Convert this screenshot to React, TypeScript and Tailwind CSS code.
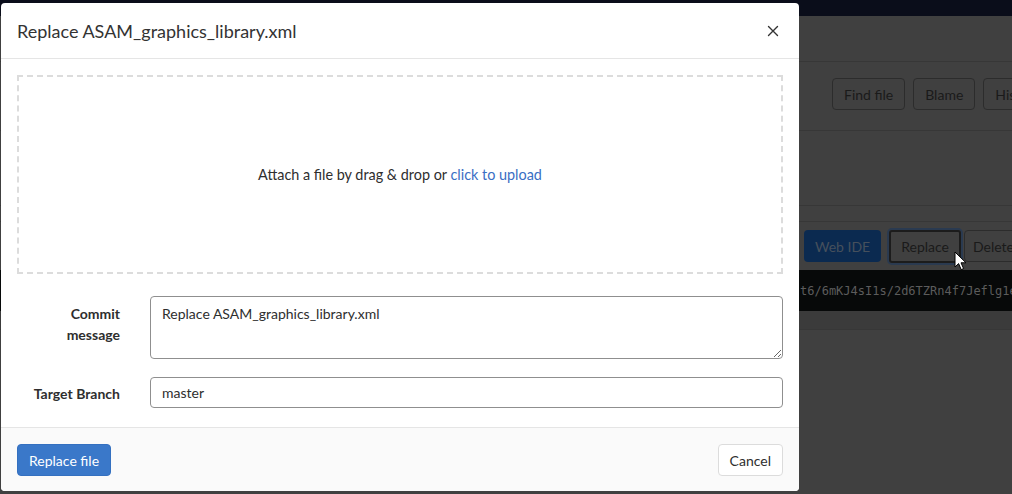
import React from "react";

const font = { fontFamily: "Lato, 'Noto Sans', sans-serif" };

function CloseIcon() {
  return (
    <svg width="12" height="12" viewBox="0 0 12 12" aria-hidden="true">
      <path d="M1.5 1.5l9 9M10.5 1.5l-9 9" stroke="#333" strokeWidth="1.4" strokeLinecap="round" />
    </svg>
  );
}

function Cursor() {
  return (
    <svg width="14" height="20" viewBox="0 0 14 20" className="absolute left-[954px] top-[251px]" aria-hidden="true">
      <path d="M1 1v15l3.6-3.4 2.6 6 2.4-1-2.6-5.8H12z" fill="#fff" stroke="#000" strokeWidth="1" strokeLinejoin="round" />
    </svg>
  );
}

function PageButton({ children, className = "" }: { children: React.ReactNode; className?: string }) {
  return (
    <div className={`shrink-0 h-[32px] flex items-center rounded-[4px] border border-[rgb(44,44,44)] text-[14px] text-[rgb(26,26,26)] ${className}`}>
      {children}
    </div>
  );
}

export default function App() {
  return (
    <div className="relative w-[1012px] h-[494px] overflow-hidden bg-[#404040]" style={font}>
      {/* dimmed page behind the modal */}
      <div className="h-[16px] bg-[#0a0d1a]" />
      <div className="h-[46px] border-b border-[rgb(55,55,55)]" />
      <div className="h-[69px] border-b border-[rgb(55,55,55)] flex items-start pt-[16px] pl-[832px] gap-[8px]">
        <PageButton className="px-[11px]">Find file</PageButton>
        <PageButton className="px-[11px]">Blame</PageButton>
        <PageButton className="px-[11px]">History</PageButton>
      </div>
      <div className="h-[75px] border-b border-[rgb(55,55,55)]" />
      <div className="h-[16px] border-b border-[rgb(55,55,55)]" />
      <div className="h-[48px] flex items-center pl-[804px]">
        <div className="shrink-0 h-[32px] px-[11px] flex items-center rounded-[4px] bg-[rgb(11,42,80)] text-[14px] text-[rgb(70,80,92)]">
          Web IDE
        </div>
        <div className="shrink-0 ml-[6px] rounded-[5px] border-[2px] border-[rgb(42,58,80)]">
          <div className="h-[33px] px-[10px] flex items-center rounded-[3px] border-[2px] border-[rgb(28,28,28)] text-[14px] text-[rgb(26,26,26)]">
            Replace
          </div>
        </div>
        <PageButton className="ml-[1px] px-[8px]">Delete</PageButton>
      </div>
      <div className="h-[41px] bg-[#070909] flex items-center pl-[800px] overflow-hidden">
        <span className="whitespace-nowrap text-[12px] text-[#5c5c5c]" style={{ fontFamily: "'DejaVu Sans Mono', monospace" }}>
          t6/6mKJ4sI1s/2d6TZRn4f7Jeflg1eQx
        </span>
      </div>
      <div className="h-[19px] bg-[#3b3b3b] border-b border-[rgb(55,55,55)]" />

      <Cursor />

      {/* modal */}
      <div className="absolute left-[1px] top-[3px] w-[798px] h-[488px] bg-white rounded-[4px] flex flex-col overflow-hidden">
        <div className="h-[56px] shrink-0 px-[16px] flex items-center justify-between border-b border-[#e5e5e5]">
          <h2 className="text-[18px] text-[#333] leading-none">Replace ASAM_graphics_library.xml</h2>
          <button type="button" className="mr-[2px] flex items-center justify-center w-[16px] h-[16px]">
            <CloseIcon />
          </button>
        </div>

        <div className="flex-1 px-[16px] pt-[16px]">
          <div className="h-[199px] border-[2px] border-dashed border-[#dcdcdc] flex items-center justify-center text-[14.4px] text-[#2e2e2e]">
            <span>
              Attach a file by drag &amp; drop or <span className="text-[#3a6ec4]">click to upload</span>
            </span>
          </div>

          <div className="mt-[22px] flex">
            <label className="w-[103px] shrink-0 pt-[7px] text-right text-[14px] leading-[21px] font-bold text-[#2e2e2e]">
              Commit
              <br />
              message
            </label>
            <textarea
              className="ml-[30px] flex-1 h-[63px] rounded-[4px] border border-[#8f8f8f] px-[11px] py-[7px] text-[14px] leading-[20px] text-[#2e2e2e] outline-none"
              defaultValue="Replace ASAM_graphics_library.xml"
              style={font}
            />
          </div>

          <div className="mt-[18px] flex">
            <label className="w-[103px] shrink-0 pt-[6px] text-right text-[14px] leading-[21px] font-bold text-[#2e2e2e]">
              Target Branch
            </label>
            <input
              className="ml-[30px] flex-1 h-[31px] rounded-[4px] border border-[#8f8f8f] px-[11px] text-[14px] text-[#2e2e2e] outline-none"
              defaultValue="master"
              style={font}
            />
          </div>
        </div>

        <div className="h-[64px] shrink-0 border-t border-[#e5e5e5] bg-[#fafafa] px-[16px] pt-[16px] flex items-start justify-between">
          <button type="button" className="h-[32px] px-[11px] rounded-[4px] bg-[#3a78c9] border border-[#3470c0] text-[14px] text-white">
            Replace file
          </button>
          <button type="button" className="h-[32px] px-[11px] rounded-[4px] bg-white border border-[#dcdcdc] text-[14px] text-[#2e2e2e]">
            Cancel
          </button>
        </div>
      </div>
    </div>
  );
}
